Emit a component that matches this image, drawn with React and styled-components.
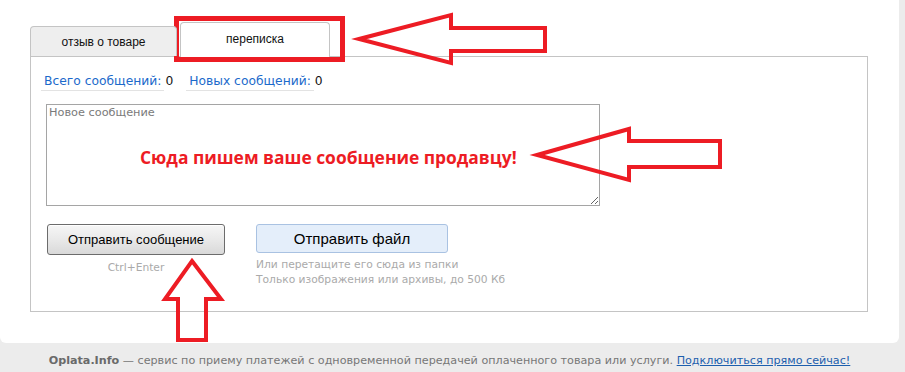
import React from 'react';
import styled, { createGlobalStyle } from 'styled-components';

const GlobalStyle = createGlobalStyle`
  body {
    margin: 0;
    background: #ececec;
    font-family: "DejaVu Sans", Verdana, sans-serif;
  }
`;

const Page = styled.div`
  position: relative;
  width: 905px;
  height: 372px;
  background: #ececec;
  overflow: hidden;
`;

const Sheet = styled.div`
  box-sizing: border-box;
  width: 899px;
  height: 343px;
  padding: 22px 0 0 30px;
  background: #fff;
  border-radius: 0 0 6px 6px;
`;

const Tabs = styled.div`
  display: flex;
  align-items: flex-end;
  gap: 3px;
`;

const Tab = styled.div`
  position: relative;
  z-index: 1;
  box-sizing: border-box;
  width: ${p => (p.$active ? 150 : 147)}px;
  height: ${p => (p.$active ? 35 : 30)}px;
  margin-bottom: ${p => (p.$active ? -1 : 0)}px;
  display: flex;
  align-items: center;
  justify-content: center;
  padding-bottom: ${p => (p.$active ? 3 : 0)}px;
  border: 1px solid #c4c4c4;
  border-bottom: none;
  border-radius: 4px 4px 0 0;
  background: ${p => (p.$active ? '#fff' : '#eeeeee')};
  color: #111;
  font: 12px "Liberation Sans", Arial, sans-serif;
`;

const Panel = styled.div`
  box-sizing: border-box;
  width: 838px;
  height: 256px;
  border: 1px solid #c4c4c4;
  padding: 16px 0 0 10px;
`;

const Counters = styled.div`
  display: flex;
  gap: 13px;
  font-size: 12.3px;
  line-height: 17px;
`;

const Counter = styled.div`
  display: flex;
  align-items: flex-start;
  gap: 1px;
  color: #111;
`;

const CounterLabel = styled.span`
  padding: 0 3px;
  border-bottom: 1px solid #e3e3e3;
  color: #1c6acb;
`;

const MessageBox = styled.textarea`
  display: block;
  box-sizing: border-box;
  width: 554px;
  height: 102px;
  margin: 13px 0 0 5px;
  padding: 1px 2px;
  border: 1px solid #a5a5a5;
  font: 11.3px "DejaVu Sans", Verdana, sans-serif;
  color: #333;
  outline: none;

  &::placeholder {
    color: #7a7a7a;
  }
`;

const Actions = styled.div`
  display: flex;
  gap: 31px;
  margin: 18px 0 0 6px;
`;

const SendCol = styled.div`
  display: flex;
  flex-direction: column;
  align-items: center;
  width: 178px;
`;

const FileCol = styled.div`
  display: flex;
  flex-direction: column;
`;

const SendButton = styled.button`
  box-sizing: border-box;
  width: 178px;
  height: 31px;
  border: 1px solid #6c6c6c;
  border-radius: 3px;
  background: linear-gradient(#f6f6f6, #e9e9e9 50%, #d9d9d9);
  box-shadow: inset 0 1px 0 #fff;
  color: #000;
  font: 13px "Liberation Sans", Arial, sans-serif;
  cursor: pointer;
`;

const FileButton = styled.button`
  box-sizing: border-box;
  width: 192px;
  height: 29px;
  border: 1px solid #a9c2e2;
  border-radius: 3px;
  background: #e4eefa;
  color: #000;
  font: 15px "Liberation Sans", Arial, sans-serif;
  cursor: pointer;
`;

const Shortcut = styled.div`
  margin-top: 6px;
  color: #aaa;
  font-size: 10.7px;
  line-height: 14px;
`;

const Hint = styled.div`
  margin-top: 4px;
  color: #aaa;
  font-size: 10.7px;
  line-height: 15px;
`;

const Footer = styled.div`
  padding-top: 10px;
  width: 899px;
  text-align: center;
  color: #777;
  font-size: 11.17px;
  line-height: 16px;

  b {
    color: #6a6a6a;
  }

  a {
    color: #1d5fae;
  }
`;

const Overlay = styled.svg`
  position: absolute;
  left: 0;
  top: 0;
  pointer-events: none;
`;

const Shout = styled.div`
  position: absolute;
  left: 140px;
  top: 145px;
  color: #ed1c24;
  font: bold 17.4px "Open Sans", "Liberation Sans", sans-serif;
  white-space: nowrap;
`;

const RED = '#ed1c24';

const Annotations = () => (
  <>
    <Overlay width="905" height="372" viewBox="0 0 905 372">
      <g fill="none" stroke={RED} strokeWidth="4" strokeLinejoin="miter">
        <rect x="176.5" y="18.5" width="166" height="41" strokeWidth="5" />
        <polygon points="359,39 451,15 451,28 545,28 545,51 451,51 451,63" />
        <polygon points="537,155 629,129 629,141 720,141 720,167 629,167 629,180" />
        <polygon points="192,261 221,299 206,299 206,340 178,340 178,299 165,299" />
      </g>
    </Overlay>
    <Shout>Сюда пишем ваше сообщение продавцу!</Shout>
  </>
);

export default function App() {
  return (
    <Page>
      <GlobalStyle />
      <Sheet>
        <Tabs>
          <Tab>отзыв о товаре</Tab>
          <Tab $active>переписка</Tab>
        </Tabs>
        <Panel>
          <Counters>
            <Counter>
              <CounterLabel>Всего сообщений:</CounterLabel>0
            </Counter>
            <Counter>
              <CounterLabel>Новых сообщений:</CounterLabel>0
            </Counter>
          </Counters>
          <MessageBox placeholder="Новое сообщение" />
          <Actions>
            <SendCol>
              <SendButton>Отправить сообщение</SendButton>
              <Shortcut>Ctrl+Enter</Shortcut>
            </SendCol>
            <FileCol>
              <FileButton>Отправить файл</FileButton>
              <Hint>
                Или перетащите его сюда из папки
                <br />
                Только изображения или архивы, до 500 Кб
              </Hint>
            </FileCol>
          </Actions>
        </Panel>
      </Sheet>
      <Footer>
        <b>Oplata.Info</b> — сервис по приему платежей с одновременной передачей оплаченного товара или услуги.{' '}
        <a href="#">Подключиться прямо сейчас!</a>
      </Footer>
      <Annotations />
    </Page>
  );
}
